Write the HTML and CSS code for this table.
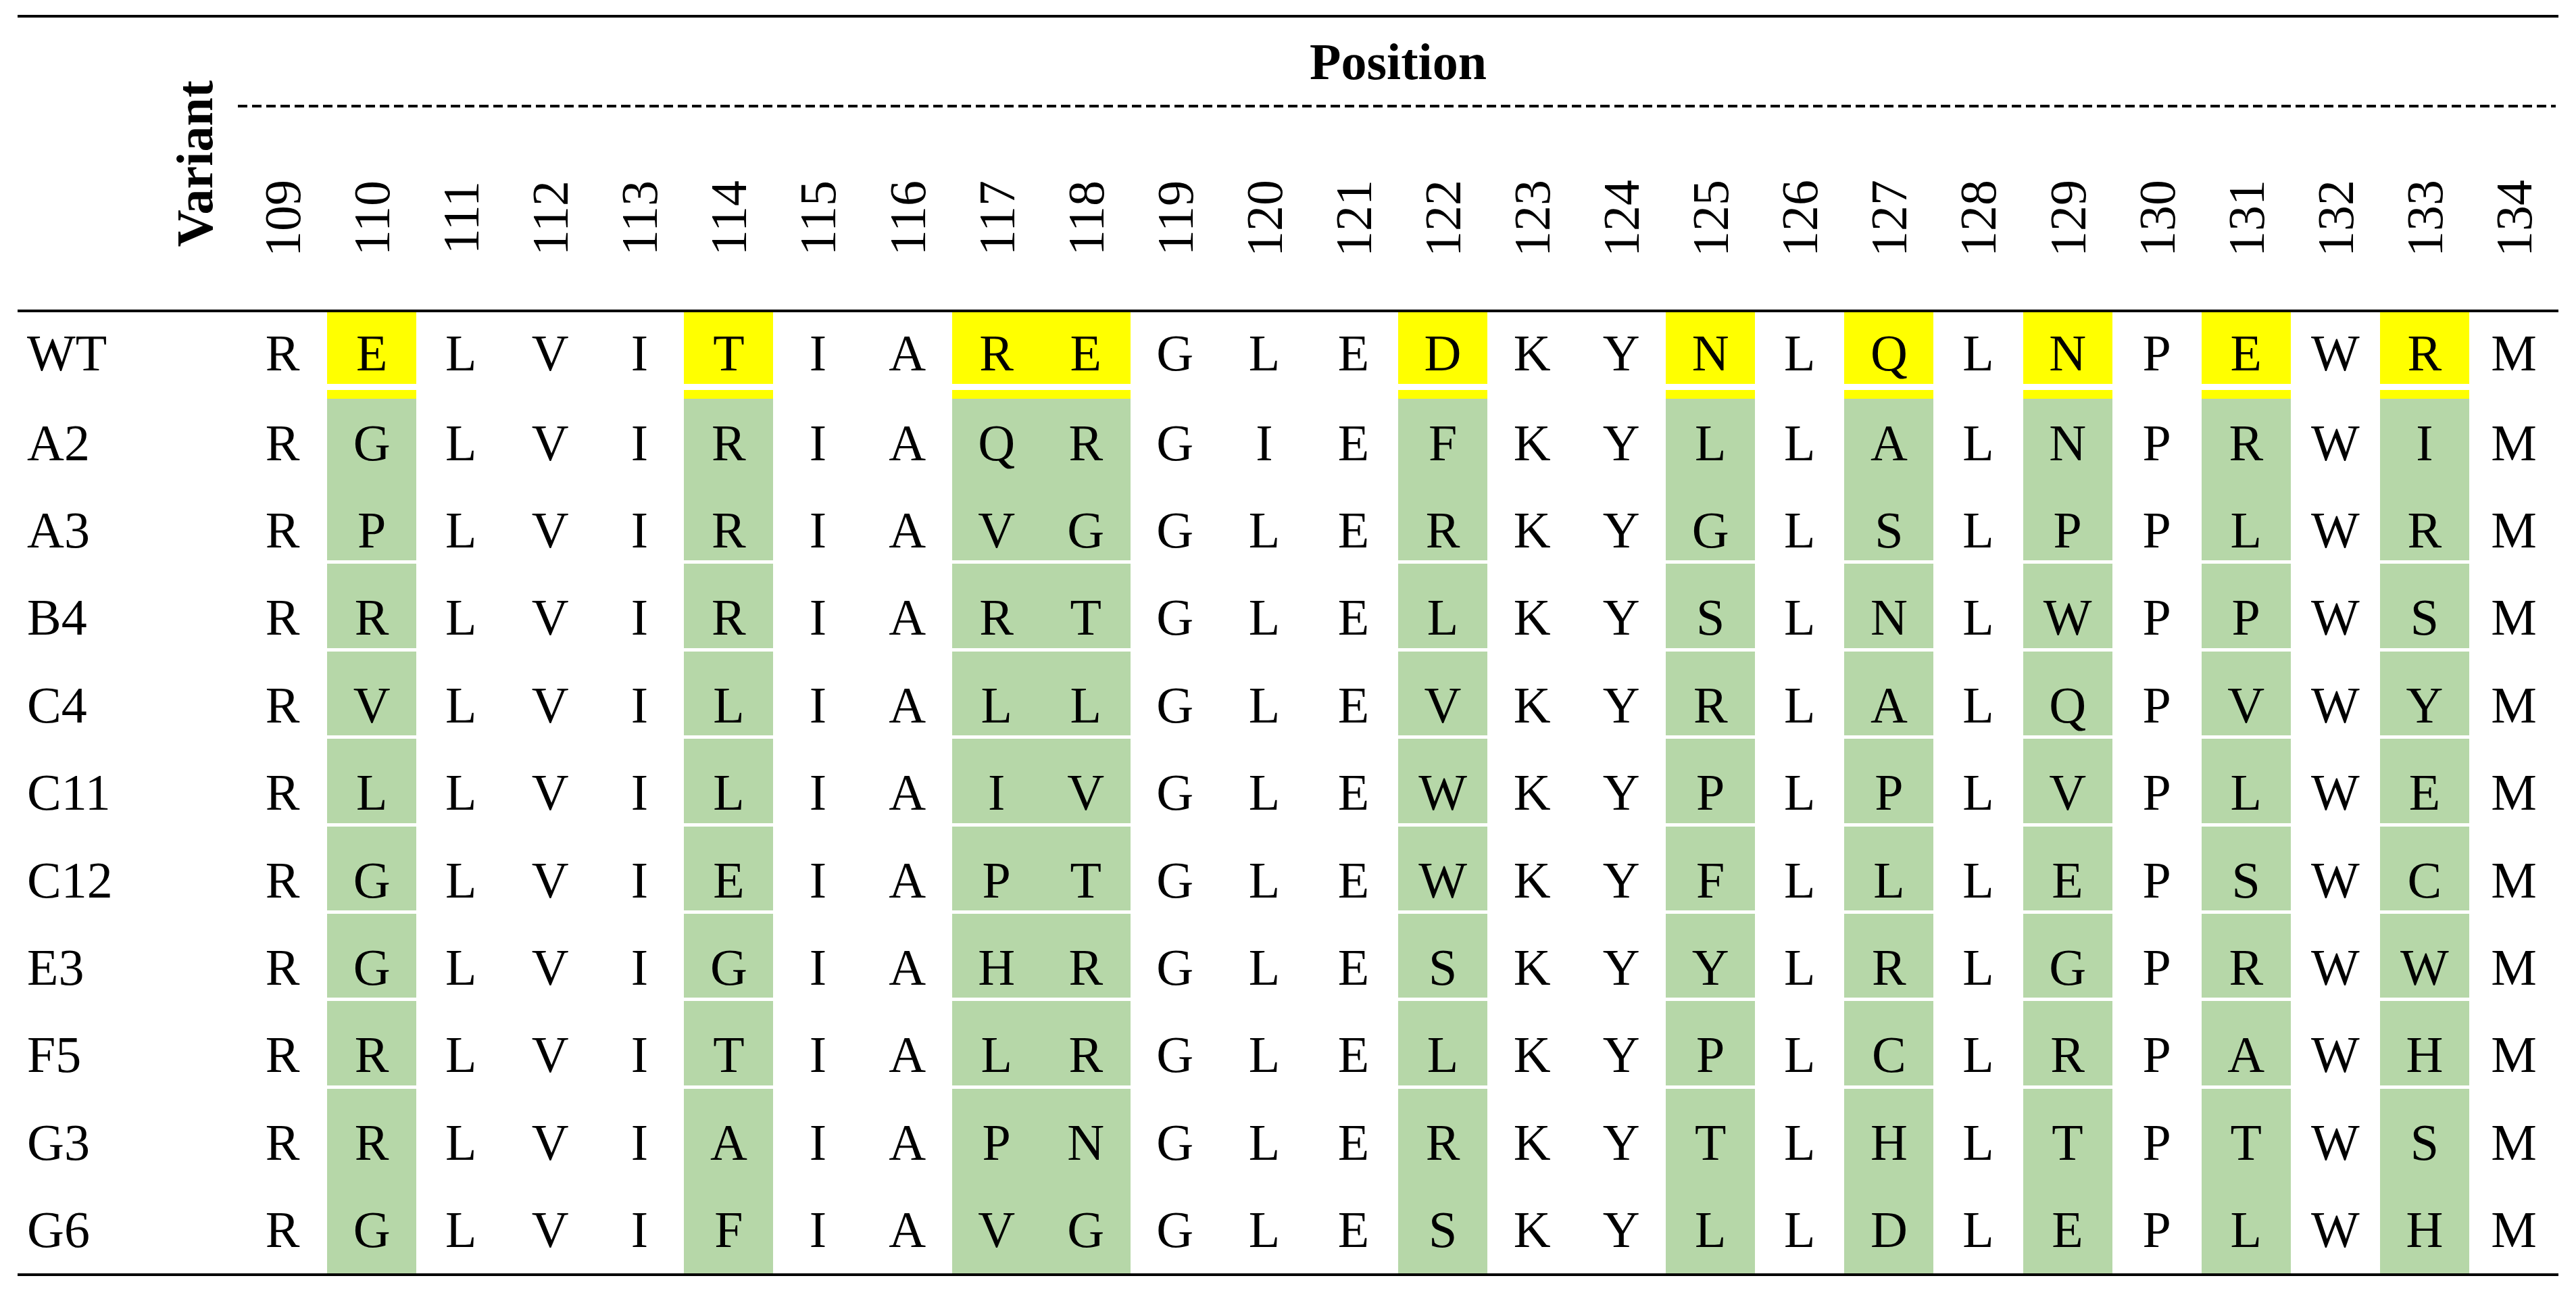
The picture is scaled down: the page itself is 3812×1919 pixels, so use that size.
FILE: index.html
```html
<!DOCTYPE html>
<html lang="en">
<head>
<meta charset="utf-8">
<title>Variant positions</title>
<link rel="stylesheet" href="styles.css">
</head>
<body>
<div class="table">
  <div class="head">
    <div class="variant"><span class="vt">Variant</span></div>
    <div class="pos-area">
      <div class="position">Position</div>
      <div class="dash"></div>
      <div class="nums">
        <div class="num"><span class="vn">109</span></div><div class="num"><span class="vn">110</span></div><div class="num"><span class="vn">111</span></div><div class="num"><span class="vn">112</span></div><div class="num"><span class="vn">113</span></div><div class="num"><span class="vn">114</span></div><div class="num"><span class="vn">115</span></div><div class="num"><span class="vn">116</span></div><div class="num"><span class="vn">117</span></div><div class="num"><span class="vn">118</span></div><div class="num"><span class="vn">119</span></div><div class="num"><span class="vn">120</span></div><div class="num"><span class="vn">121</span></div><div class="num"><span class="vn">122</span></div><div class="num"><span class="vn">123</span></div><div class="num"><span class="vn">124</span></div><div class="num"><span class="vn">125</span></div><div class="num"><span class="vn">126</span></div><div class="num"><span class="vn">127</span></div><div class="num"><span class="vn">128</span></div><div class="num"><span class="vn">129</span></div><div class="num"><span class="vn">130</span></div><div class="num"><span class="vn">131</span></div><div class="num"><span class="vn">132</span></div><div class="num"><span class="vn">133</span></div><div class="num"><span class="vn">134</span></div>
      </div>
    </div>
  </div>
  <div class="body">
    <div class="row wt"><div class="cell label">WT</div><div class="cell">R</div><div class="cell s">E</div><div class="cell">L</div><div class="cell">V</div><div class="cell">I</div><div class="cell s">T</div><div class="cell">I</div><div class="cell">A</div><div class="cell s">R</div><div class="cell s">E</div><div class="cell">G</div><div class="cell">L</div><div class="cell">E</div><div class="cell s">D</div><div class="cell">K</div><div class="cell">Y</div><div class="cell s">N</div><div class="cell">L</div><div class="cell s">Q</div><div class="cell">L</div><div class="cell s">N</div><div class="cell">P</div><div class="cell s">E</div><div class="cell">W</div><div class="cell s">R</div><div class="cell">M</div></div>
    <div class="row"><div class="cell label">A2</div><div class="cell">R</div><div class="cell s">G</div><div class="cell">L</div><div class="cell">V</div><div class="cell">I</div><div class="cell s">R</div><div class="cell">I</div><div class="cell">A</div><div class="cell s">Q</div><div class="cell s">R</div><div class="cell">G</div><div class="cell">I</div><div class="cell">E</div><div class="cell s">F</div><div class="cell">K</div><div class="cell">Y</div><div class="cell s">L</div><div class="cell">L</div><div class="cell s">A</div><div class="cell">L</div><div class="cell s">N</div><div class="cell">P</div><div class="cell s">R</div><div class="cell">W</div><div class="cell s">I</div><div class="cell">M</div></div>
    <div class="row gap"><div class="cell label">A3</div><div class="cell">R</div><div class="cell s">P</div><div class="cell">L</div><div class="cell">V</div><div class="cell">I</div><div class="cell s">R</div><div class="cell">I</div><div class="cell">A</div><div class="cell s">V</div><div class="cell s">G</div><div class="cell">G</div><div class="cell">L</div><div class="cell">E</div><div class="cell s">R</div><div class="cell">K</div><div class="cell">Y</div><div class="cell s">G</div><div class="cell">L</div><div class="cell s">S</div><div class="cell">L</div><div class="cell s">P</div><div class="cell">P</div><div class="cell s">L</div><div class="cell">W</div><div class="cell s">R</div><div class="cell">M</div></div>
    <div class="row gap"><div class="cell label">B4</div><div class="cell">R</div><div class="cell s">R</div><div class="cell">L</div><div class="cell">V</div><div class="cell">I</div><div class="cell s">R</div><div class="cell">I</div><div class="cell">A</div><div class="cell s">R</div><div class="cell s">T</div><div class="cell">G</div><div class="cell">L</div><div class="cell">E</div><div class="cell s">L</div><div class="cell">K</div><div class="cell">Y</div><div class="cell s">S</div><div class="cell">L</div><div class="cell s">N</div><div class="cell">L</div><div class="cell s">W</div><div class="cell">P</div><div class="cell s">P</div><div class="cell">W</div><div class="cell s">S</div><div class="cell">M</div></div>
    <div class="row gap"><div class="cell label">C4</div><div class="cell">R</div><div class="cell s">V</div><div class="cell">L</div><div class="cell">V</div><div class="cell">I</div><div class="cell s">L</div><div class="cell">I</div><div class="cell">A</div><div class="cell s">L</div><div class="cell s">L</div><div class="cell">G</div><div class="cell">L</div><div class="cell">E</div><div class="cell s">V</div><div class="cell">K</div><div class="cell">Y</div><div class="cell s">R</div><div class="cell">L</div><div class="cell s">A</div><div class="cell">L</div><div class="cell s">Q</div><div class="cell">P</div><div class="cell s">V</div><div class="cell">W</div><div class="cell s">Y</div><div class="cell">M</div></div>
    <div class="row gap"><div class="cell label">C11</div><div class="cell">R</div><div class="cell s">L</div><div class="cell">L</div><div class="cell">V</div><div class="cell">I</div><div class="cell s">L</div><div class="cell">I</div><div class="cell">A</div><div class="cell s">I</div><div class="cell s">V</div><div class="cell">G</div><div class="cell">L</div><div class="cell">E</div><div class="cell s">W</div><div class="cell">K</div><div class="cell">Y</div><div class="cell s">P</div><div class="cell">L</div><div class="cell s">P</div><div class="cell">L</div><div class="cell s">V</div><div class="cell">P</div><div class="cell s">L</div><div class="cell">W</div><div class="cell s">E</div><div class="cell">M</div></div>
    <div class="row gap"><div class="cell label">C12</div><div class="cell">R</div><div class="cell s">G</div><div class="cell">L</div><div class="cell">V</div><div class="cell">I</div><div class="cell s">E</div><div class="cell">I</div><div class="cell">A</div><div class="cell s">P</div><div class="cell s">T</div><div class="cell">G</div><div class="cell">L</div><div class="cell">E</div><div class="cell s">W</div><div class="cell">K</div><div class="cell">Y</div><div class="cell s">F</div><div class="cell">L</div><div class="cell s">L</div><div class="cell">L</div><div class="cell s">E</div><div class="cell">P</div><div class="cell s">S</div><div class="cell">W</div><div class="cell s">C</div><div class="cell">M</div></div>
    <div class="row gap"><div class="cell label">E3</div><div class="cell">R</div><div class="cell s">G</div><div class="cell">L</div><div class="cell">V</div><div class="cell">I</div><div class="cell s">G</div><div class="cell">I</div><div class="cell">A</div><div class="cell s">H</div><div class="cell s">R</div><div class="cell">G</div><div class="cell">L</div><div class="cell">E</div><div class="cell s">S</div><div class="cell">K</div><div class="cell">Y</div><div class="cell s">Y</div><div class="cell">L</div><div class="cell s">R</div><div class="cell">L</div><div class="cell s">G</div><div class="cell">P</div><div class="cell s">R</div><div class="cell">W</div><div class="cell s">W</div><div class="cell">M</div></div>
    <div class="row gap"><div class="cell label">F5</div><div class="cell">R</div><div class="cell s">R</div><div class="cell">L</div><div class="cell">V</div><div class="cell">I</div><div class="cell s">T</div><div class="cell">I</div><div class="cell">A</div><div class="cell s">L</div><div class="cell s">R</div><div class="cell">G</div><div class="cell">L</div><div class="cell">E</div><div class="cell s">L</div><div class="cell">K</div><div class="cell">Y</div><div class="cell s">P</div><div class="cell">L</div><div class="cell s">C</div><div class="cell">L</div><div class="cell s">R</div><div class="cell">P</div><div class="cell s">A</div><div class="cell">W</div><div class="cell s">H</div><div class="cell">M</div></div>
    <div class="row"><div class="cell label">G3</div><div class="cell">R</div><div class="cell s">R</div><div class="cell">L</div><div class="cell">V</div><div class="cell">I</div><div class="cell s">A</div><div class="cell">I</div><div class="cell">A</div><div class="cell s">P</div><div class="cell s">N</div><div class="cell">G</div><div class="cell">L</div><div class="cell">E</div><div class="cell s">R</div><div class="cell">K</div><div class="cell">Y</div><div class="cell s">T</div><div class="cell">L</div><div class="cell s">H</div><div class="cell">L</div><div class="cell s">T</div><div class="cell">P</div><div class="cell s">T</div><div class="cell">W</div><div class="cell s">S</div><div class="cell">M</div></div>
    <div class="row"><div class="cell label">G6</div><div class="cell">R</div><div class="cell s">G</div><div class="cell">L</div><div class="cell">V</div><div class="cell">I</div><div class="cell s">F</div><div class="cell">I</div><div class="cell">A</div><div class="cell s">V</div><div class="cell s">G</div><div class="cell">G</div><div class="cell">L</div><div class="cell">E</div><div class="cell s">S</div><div class="cell">K</div><div class="cell">Y</div><div class="cell s">L</div><div class="cell">L</div><div class="cell s">D</div><div class="cell">L</div><div class="cell s">E</div><div class="cell">P</div><div class="cell s">L</div><div class="cell">W</div><div class="cell s">H</div><div class="cell">M</div></div>
  </div>
</div>
</body>
</html>
```

FILE: styles.css
```css
html, body {
  margin: 0;
  padding: 0;
  background: #ffffff;
}

body {
  font-family: "Liberation Serif", "Times New Roman", serif;
  font-size: 76px;
  color: #000000;
}

.table {
  margin: 22px 0 0 26px;
  width: 3760px;
  border-top: 4px solid #000000;
  border-bottom: 4px solid #000000;
}

.head {
  display: flex;
  height: 432px;
  border-bottom: 4px solid #000000;
}

.variant {
  width: 326px;
  flex: none;
  box-sizing: border-box;
  display: flex;
  align-items: center;
  justify-content: flex-end;
  padding-right: 26px;
}

.vt {
  writing-mode: vertical-rl;
  transform: rotate(180deg);
  line-height: 1;
  font-weight: bold;
  white-space: nowrap;
}

.pos-area {
  flex: 1;
  display: flex;
  flex-direction: column;
}

.position {
  height: 129px;
  display: flex;
  align-items: center;
  justify-content: center;
  font-weight: bold;
  line-height: 1;
}

.dash {
  height: 4px;
  margin-right: 4px;
  background: repeating-linear-gradient(to right, #000000 0 14px, transparent 14px 21px);
}

.nums {
  flex: 1;
  display: grid;
  grid-template-columns: repeat(26, 1fr);
}

.num {
  display: flex;
  align-items: center;
  justify-content: center;
  padding-top: 28px;
}

.vn {
  writing-mode: vertical-rl;
  transform: rotate(180deg);
  line-height: 1;
  white-space: nowrap;
}

.row {
  display: grid;
  grid-template-columns: 326px repeat(26, 1fr);
  height: 129.4px;
}

.row.wt {
  height: 128px;
}

.cell {
  display: flex;
  align-items: center;
  justify-content: center;
  line-height: 1;
}

.cell.label {
  justify-content: flex-start;
  padding-left: 14px;
}

.cell.s {
  background: #b6d7a8;
}

.row.gap .cell.s {
  background: linear-gradient(to bottom, #b6d7a8 0 110px, #ffffff 110px 115px, #b6d7a8 115px);
}

.row.wt .cell {
  padding-bottom: 8px;
}

.row.wt .cell.s {
  background: linear-gradient(to bottom, #ffff00 0 106px, #ffffff 106px 115px, #ffff00 115px 128px);
}
```
